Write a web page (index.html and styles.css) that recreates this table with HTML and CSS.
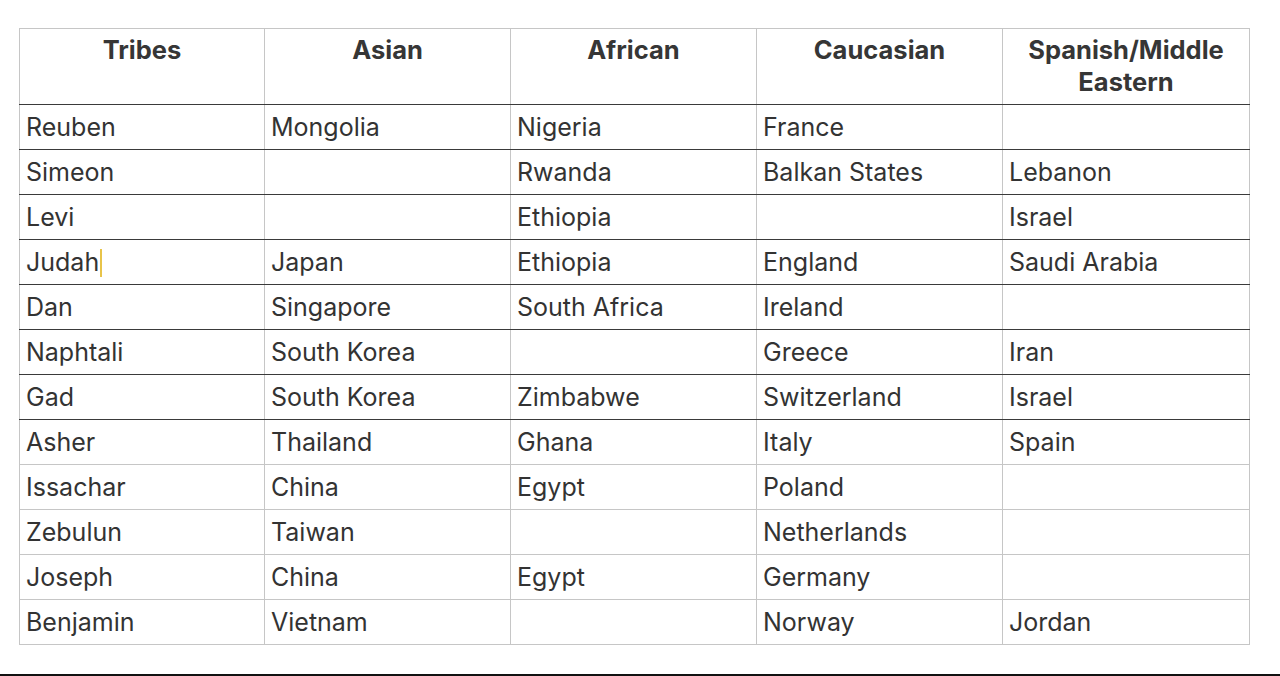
FILE: index.html
```html
<!DOCTYPE html>
<html>
<head>
<meta charset="utf-8">
<link rel="stylesheet" href="styles.css">
</head>
<body>
<div class="page">
  <table class="grid">
    <colgroup><col class="c1"><col><col><col><col class="c5"></colgroup>
    <thead>
      <tr><th>Tribes</th><th>Asian</th><th>African</th><th>Caucasian</th><th>Spanish/Middle Eastern</th></tr>
    </thead>
    <tbody>
      <tr class="dark"><td>Reuben</td><td>Mongolia</td><td>Nigeria</td><td>France</td><td></td></tr>
      <tr class="dark"><td>Simeon</td><td></td><td>Rwanda</td><td>Balkan States</td><td>Lebanon</td></tr>
      <tr class="dark"><td>Levi</td><td></td><td>Ethiopia</td><td></td><td>Israel</td></tr>
      <tr class="dark"><td>Judah<span class="caret"></span></td><td>Japan</td><td>Ethiopia</td><td>England</td><td>Saudi Arabia</td></tr>
      <tr class="dark"><td>Dan</td><td>Singapore</td><td>South Africa</td><td>Ireland</td><td></td></tr>
      <tr class="dark"><td>Naphtali</td><td>South Korea</td><td></td><td>Greece</td><td>Iran</td></tr>
      <tr class="dark"><td>Gad</td><td>South Korea</td><td>Zimbabwe</td><td>Switzerland</td><td>Israel</td></tr>
      <tr><td>Asher</td><td>Thailand</td><td>Ghana</td><td>Italy</td><td>Spain</td></tr>
      <tr><td>Issachar</td><td>China</td><td>Egypt</td><td>Poland</td><td></td></tr>
      <tr><td>Zebulun</td><td>Taiwan</td><td></td><td>Netherlands</td><td></td></tr>
      <tr><td>Joseph</td><td>China</td><td>Egypt</td><td>Germany</td><td></td></tr>
      <tr><td>Benjamin</td><td>Vietnam</td><td></td><td>Norway</td><td>Jordan</td></tr>
    </tbody>
  </table>
  <div class="rule"></div>
</div>
</body>
</html>
```
FILE: styles.css
```css
html, body {
  margin: 0;
  padding: 0;
  background: #ffffff;
}
.page {
  width: 1280px;
  height: 676px;
  position: relative;
  overflow: hidden;
  padding: 28px 0 0 19px;
  box-sizing: border-box;
  font-family: Inter, "Liberation Sans", sans-serif;
  color: #333333;
}
.grid {
  border-collapse: collapse;
  table-layout: fixed;
  width: 1230px;
}
.grid col { width: 246px; }
.grid col.c1 { width: 245px; }
.grid col.c5 { width: 247px; }
.grid th, .grid td {
  border-left: 1px solid #c6c6c6;
  border-right: 1px solid #c6c6c6;
  box-sizing: border-box;
}
.grid th {
  height: 76px;
  vertical-align: top;
  font-size: 25.5px;
  font-weight: 700;
  line-height: 32px;
  padding: 5px 4px 0;
  text-align: center;
  color: #363636;
  border-top: 1px solid #c6c6c6;
  border-bottom: 1px solid #3a3a3a;
}
.grid td {
  height: 45px;
  font-size: 25px;
  line-height: 30px;
  padding: 0 6px 1px;
  vertical-align: middle;
  text-align: left;
  border-bottom: 1px solid #c6c6c6;
  white-space: nowrap;
}
.grid tr.dark td {
  border-bottom: 1px solid #3a3a3a;
}
.caret {
  display: inline-block;
  width: 2px;
  height: 28px;
  background: #e8c44a;
  vertical-align: -6px;
  margin-left: 1px;
}
.rule {
  position: absolute;
  left: 0;
  right: 0;
  top: 674px;
  height: 2px;
  background: #111111;
}
```
